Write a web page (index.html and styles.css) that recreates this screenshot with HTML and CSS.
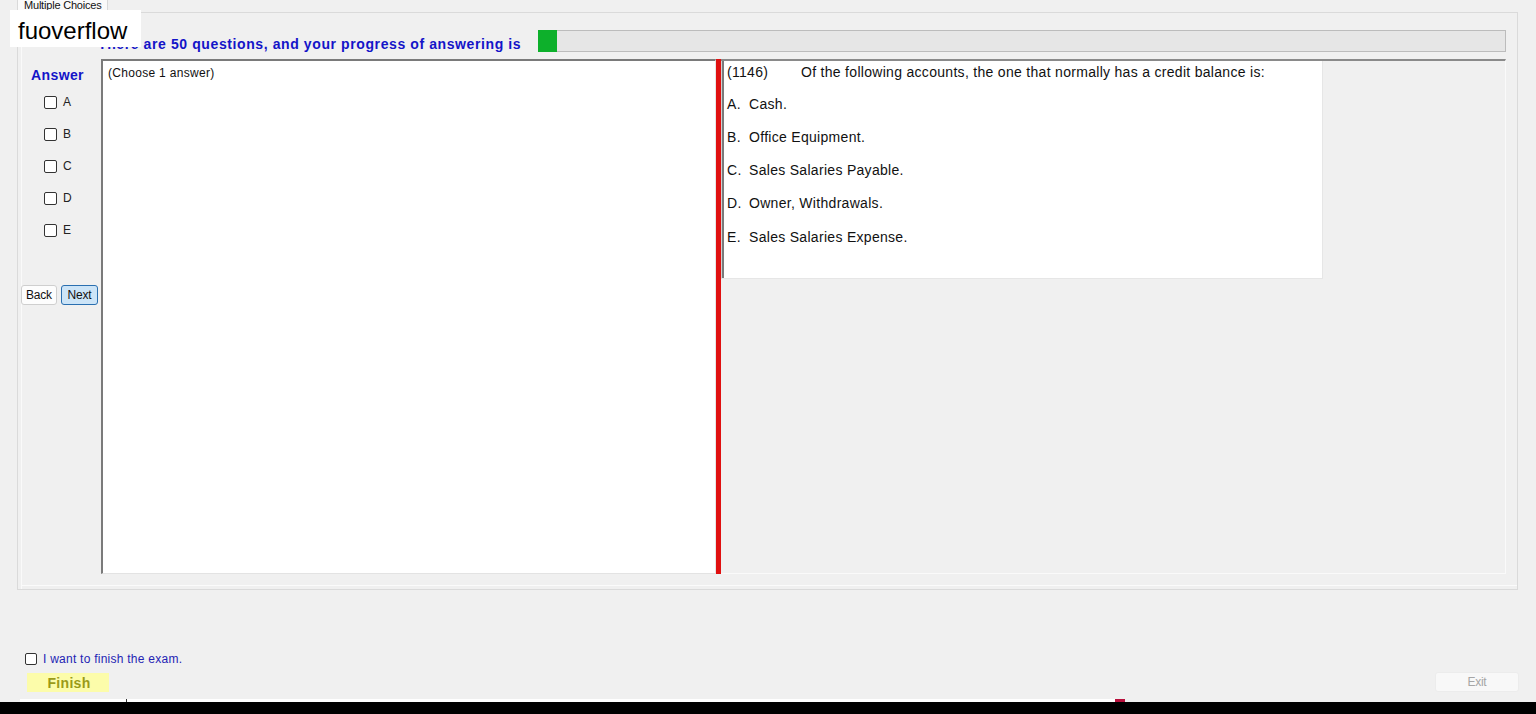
FILE: index.html
```html
<!DOCTYPE html>
<html>
<head>
<meta charset="utf-8">
<title>Multiple Choices</title>
<link rel="stylesheet" href="styles.css">
</head>
<body>
<div class="window">
  <div class="badge">fuoverflow</div>
  <div class="tabs"><div class="tab">Multiple Choices</div></div>
  <div class="tabpanel">
    <div class="header">
      <div class="header-text">There are 50 questions, and your progress of answering is</div>
      <div class="progress"><div class="progress-fill" style="width:19px"></div></div>
    </div>
    <div class="body">
      <div class="answer-col">
        <div class="answer-title">Answer</div>
        <div class="opts">
          <label class="opt"><span class="cb"></span><span>A</span></label>
          <label class="opt"><span class="cb"></span><span>B</span></label>
          <label class="opt"><span class="cb"></span><span>C</span></label>
          <label class="opt"><span class="cb"></span><span>D</span></label>
          <label class="opt"><span class="cb"></span><span>E</span></label>
        </div>
        <div class="nav">
          <button class="btn back">Back</button>
          <button class="btn next">Next</button>
        </div>
      </div>
      <div class="answer-panel">(Choose 1 answer)</div>
      <div class="splitter"></div>
      <div class="question-area">
        <div class="question-box">
          <div class="qline first"><span class="qnum">(1146)</span>Of the following accounts, the one that normally has a credit balance is:</div>
          <div class="qline a"><span class="qlet">A.</span>Cash.</div>
          <div class="qline"><span class="qlet">B.</span>Office Equipment.</div>
          <div class="qline"><span class="qlet">C.</span>Sales Salaries Payable.</div>
          <div class="qline"><span class="qlet">D.</span>Owner, Withdrawals.</div>
          <div class="qline e"><span class="qlet">E.</span>Sales Salaries Expense.</div>
        </div>
      </div>
    </div>
  </div>
  <div class="spacer"></div>
  <div class="bottom">
    <label class="finish-check"><span class="cb"></span><span class="finish-text">I want to finish the exam.</span></label>
    <div class="finish-row">
      <button class="finish">Finish</button>
      <button class="exit">Exit</button>
    </div>
  </div>
  <div class="taskstrip">
    <div class="strip-white"><span class="tick"></span></div>
    <div class="strip-red"></div>
  </div>
  <div class="blackbar"></div>
</div>
</body>
</html>
```

FILE: styles.css
```css
* { box-sizing: border-box; }
html, body { margin: 0; padding: 0; }
body {
  background: #f0f0f0;
  font-family: "Liberation Sans", Arial, sans-serif;
  color: #000;
  overflow: hidden;
}
.window {
  position: relative;
  width: 1536px;
  height: 714px;
  display: flex;
  flex-direction: column;
}
.badge {
  position: absolute;
  left: 10px;
  top: 10px;
  width: 131px;
  height: 37px;
  background: #fff;
  font-size: 24px;
  line-height: 30px;
  padding: 6px 0 0 8px;
  color: #000;
  z-index: 5;
}
.tabs {
  height: 12px;
  padding-left: 17px;
  display: flex;
}
.tab {
  width: 91px;
  height: 13px;
  overflow: hidden;
  background: #fafafa;
  border-right: 1px solid #d9d9d9;
  border-left: 1px solid #d9d9d9;
  font-size: 11px;
  line-height: 10px;
  letter-spacing: -0.2px;
  padding-left: 6px;
  color: #111;
  position: relative;
  z-index: 1;
}
.tabpanel {
  margin: 0 18px 0 17px;
  height: 578px;
  border: 1px solid #dadada;
  background: #f0f0f0;
  box-shadow: inset 3px 0 0 #f0f0f0, inset 4px 0 0 #fafafa, inset 0 -3px 0 #f0f0f0, inset 0 -4px 0 #fbfbfb;
  padding: 17px 11px 0 0;
}
.header {
  display: flex;
  align-items: flex-start;
  height: 22px;
}
.header-text {
  width: 520px;
  padding-left: 80px;
  padding-top: 6px;
  font-size: 14px;
  line-height: 16px;
  font-weight: bold;
  letter-spacing: 0.6px;
  color: #1414c8;
  white-space: nowrap;
}
.progress {
  flex: 1;
  height: 22px;
  background: #e6e6e6;
  border: 1px solid #bcbcbc;
  position: relative;
}
.progress-fill {
  position: absolute;
  left: -1px;
  top: -1px;
  bottom: -1px;
  background: #0db02b;
}
.body {
  margin-top: 7px;
  height: 515px;
  display: flex;
}
.answer-col {
  width: 83px;
  display: flex;
  flex-direction: column;
  box-shadow: inset 3px 0 0 #f0f0f0, inset 4px 0 0 #fafafa;
}
.answer-title {
  margin-top: 8px;
  padding-left: 13px;
  font-size: 14px;
  line-height: 16px;
  font-weight: bold;
  letter-spacing: 0.4px;
  color: #1414c8;
}
.opts {
  margin-top: 3px;
  display: flex;
  flex-direction: column;
}
.opt {
  height: 32px;
  display: flex;
  align-items: center;
  padding-left: 26px;
  font-size: 12px;
  color: #222;
}
.cb {
  width: 13px;
  height: 13px;
  border: 1px solid #333;
  border-radius: 2px;
  background: #fff;
  margin-right: 6px;
  flex: none;
}
.nav {
  margin-top: 39px;
  padding-left: 3px;
  display: flex;
  gap: 4px;
}
.btn {
  height: 20px;
  padding: 0;
  font-family: "Liberation Sans", Arial, sans-serif;
  font-size: 12px;
  line-height: 18px;
  letter-spacing: -0.2px;
  color: #111;
  border-radius: 3px;
}
.back {
  width: 36px;
  background: #fdfdfd;
  border: 1px solid #cfcfcf;
}
.next {
  width: 37px;
  background: #cce4f7;
  border: 1px solid #2a6fb0;
}
.answer-panel {
  width: 615px;
  background: #fff;
  border-top: 2px solid #7a7a7a;
  border-left: 2px solid #7a7a7a;
  border-right: 1px solid #e6e6e6;
  border-bottom: 1px solid #e3e3e3;
  padding: 5px 0 0 5px;
  font-size: 12px;
  line-height: 15px;
  letter-spacing: 0.3px;
  color: #111;
}
.splitter {
  width: 5px;
  background: #e01010;
}
.question-area {
  flex: 1;
  border-top: 2px solid #8a8a8a;
  border-right: 1px solid #fafafa;
  border-bottom: 1px solid #fafafa;
  background: #f0f0f0;
}
.question-box {
  width: 602px;
  height: 218px;
  background: #fff;
  border-left: 1px solid #d0d0d0;
  box-shadow: inset 2px 0 0 #7a7a7a;
  border-right: 1px solid #e6e6e6;
  border-bottom: 1px solid #e6e6e6;
  padding: 3px 0 0 5px;
  font-size: 14px;
  line-height: 16px;
  letter-spacing: 0.3px;
  color: #111;
}
.qline { margin-top: 17px; white-space: nowrap; }
.qline.first { margin-top: 0; }
.qline.a { margin-top: 16px; }
.qline.e { margin-top: 18px; }
.qnum { display: inline-block; width: 74px; }
.qlet { display: inline-block; width: 22px; }
.spacer { flex: 1; }
.bottom {
  display: flex;
  flex-direction: column;
  margin-bottom: 7px;
}
.finish-check {
  display: flex;
  align-items: center;
  height: 16px;
  padding-left: 25px;
  font-size: 12px;
}
.finish-check .cb { width: 12px; height: 12px; margin-right: 6px; }
.finish-text { color: #2424b4; letter-spacing: 0.25px; }
.finish-row {
  margin-top: 5px;
  display: flex;
  justify-content: space-between;
  align-items: flex-start;
  padding: 0 17px 0 27px;
}
.finish {
  width: 82px;
  height: 19px;
  margin-top: 1px;
  border: none;
  background: #fcfcaa;
  font-family: "Liberation Sans", Arial, sans-serif;
  font-size: 14px;
  font-weight: bold;
  letter-spacing: 0.3px;
  color: #9a9a18;
  padding: 0 0 0 2px;
}
.exit {
  width: 84px;
  height: 20px;
  border: 1px solid #ececec;
  border-radius: 3px;
  background: #f8f8f8;
  font-family: "Liberation Sans", Arial, sans-serif;
  font-size: 12px;
  letter-spacing: -0.3px;
  color: #a6a6a6;
  padding: 0;
}
.taskstrip {
  height: 3px;
  display: flex;
  padding-left: 20px;
}
.strip-white {
  width: 1095px;
  background: #fff;
  position: relative;
}
.tick {
  position: absolute;
  left: 106px;
  top: 0;
  width: 1px;
  height: 3px;
  background: #333;
}
.strip-red {
  width: 10px;
  background: #b8103c;
}
.blackbar {
  height: 12px;
  background: #000;
}
```
